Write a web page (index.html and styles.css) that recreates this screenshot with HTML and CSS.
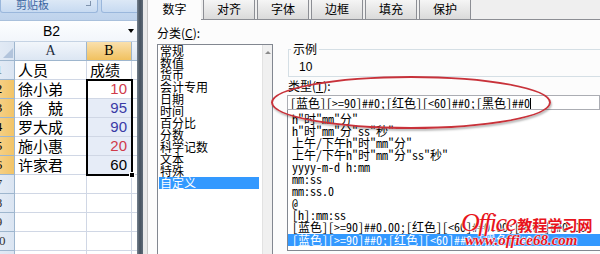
FILE: index.html
```html
<!DOCTYPE html>
<html lang="zh-CN">
<head>
<meta charset="utf-8">
<title>设置单元格格式</title>
<link rel="stylesheet" href="styles.css">
</head>
<body>
<div class="screen">
  <section class="sheet">
    <div class="ribbon">
      <div class="rgroup g1"><span class="rlabel">剪贴板</span><span class="launcher"></span></div>
      <div class="rgroup g2"></div>
    </div>
    <div class="namebar"><span class="namebox">B2</span><span class="dd"></span></div>
    <div class="gridwrap">
      <div class="grid">
        <div class="rh corner"><span class="tri"></span></div><div class="ch">A</div><div class="ch on">B</div><div class="ch"></div>
        <div class="rh">1</div><div class="c">人员</div><div class="c">成绩</div><div class="c"></div>
        <div class="rh on">2</div><div class="c">徐小弟</div><div class="c n red">10</div><div class="c"></div>
        <div class="rh on">3</div><div class="c">徐　兢</div><div class="c n blue tint">95</div><div class="c"></div>
        <div class="rh on">4</div><div class="c">罗大成</div><div class="c n blue tint">90</div><div class="c"></div>
        <div class="rh on">5</div><div class="c">施小惠</div><div class="c n red tint">20</div><div class="c"></div>
        <div class="rh on">6</div><div class="c">许家君</div><div class="c n tint">60</div><div class="c"></div>
        <div class="rh">7</div><div class="c"></div><div class="c"></div><div class="c"></div>
        <div class="rh">8</div><div class="c"></div><div class="c"></div><div class="c"></div>
        <div class="rh">9</div><div class="c"></div><div class="c"></div><div class="c"></div>
        <div class="rh">10</div><div class="c"></div><div class="c"></div><div class="c"></div>
        <div class="rh">11</div><div class="c"></div><div class="c"></div><div class="c"></div>
      </div>
      <div class="selbox"></div>
      <div class="handle"></div>
    </div>
  </section>
  <div class="edge"></div>
  <div class="gapstrip"></div>
  <section class="dialog">
    <div class="tabs">
      <div class="tab active">数字</div>
      <div class="tab">对齐</div>
      <div class="tab">字体</div>
      <div class="tab">边框</div>
      <div class="tab">填充</div>
      <div class="tab">保护</div>
    </div>
    <div class="body">
      <div class="catcol">
        <div class="lbl">分类(<u>C</u>):</div>
        <div class="catbox">
          <ul class="catlist">
            <li>常规</li>
            <li>数值</li>
            <li>货币</li>
            <li>会计专用</li>
            <li>日期</li>
            <li>时间</li>
            <li>百分比</li>
            <li>分数</li>
            <li>科学记数</li>
            <li>文本</li>
            <li>特殊</li>
            <li class="sel">自定义</li>
          </ul>
          <div class="vscroll"><span class="up"></span></div>
        </div>
      </div>
      <div class="maincol">
        <fieldset class="sample">
          <legend>示例</legend>
          <div class="sval">10</div>
        </fieldset>
        <div class="lbl tl">类型(<u>T</u>):</div>
        <div class="input">[蓝色][&gt;=90]##0;[红色][&lt;60]##0;[黑色]##0<span class="caret"></span></div>
        <ul class="fmtlist">
          <li>h"时"mm"分"</li>
          <li>h"时"mm"分"ss"秒"</li>
          <li>上午/下午h"时"mm"分"</li>
          <li>上午/下午h"时"mm"分"ss"秒"</li>
          <li>yyyy-m-d h:mm</li>
          <li>mm:ss</li>
          <li>mm:ss.0</li>
          <li>@</li>
          <li>[h]:mm:ss</li>
          <li>[蓝色][&gt;=90]##0.00;[红色][&lt;60]##0.00;[黑色]##0.00</li>
          <li class="sel">[蓝色][&gt;=90]##0;[红色][&lt;60]##0;[黑色]##0</li>
        </ul>
      </div>
    </div>
  </section>
  <div class="ring"></div>
  <div class="wm">
    <div class="wm1"><span class="wmo">Office</span><span class="wmc">教程学习网</span></div>
    <div class="wm2">www.office68.com</div>
  </div>
</div>
</body>
</html>
```
FILE: styles.css
```css
* { box-sizing: border-box; margin: 0; padding: 0; }
html, body { width: 600px; height: 254px; overflow: hidden; background: #fff; }
body { font-family: "Noto Sans CJK SC", sans-serif; font-size: 12px; color: #000; }
ul { list-style: none; }

.screen { position: relative; display: flex; width: 600px; height: 254px; overflow: hidden; }

/* ---------- spreadsheet ---------- */
.sheet { width: 137px; flex: none; overflow: hidden; display: flex; flex-direction: column; background: #fff; }
.ribbon { height: 20px; flex: none; display: flex; background: linear-gradient(#cadcf1, #bfd3ec); }
.rgroup { height: 13px; background: linear-gradient(#dce8f6, #c7daf1); border: 1px solid #9ab7dc; border-top: none; border-radius: 0 0 3px 3px; }
.g1 { width: 98px; flex: none; display: flex; align-items: flex-end; padding-left: 15px; }
.g2 { width: 40px; flex: none; margin-left: 3px; }
.rlabel { font-size: 11px; line-height: 11px; color: #3a64a0; margin-bottom: 2px; }
.launcher { width: 5px; height: 5px; margin: 1px 6px 0 auto; align-self: flex-start; border-right: 1px solid #7f93ad; border-bottom: 1px solid #7f93ad; }

.namebar { height: 22px; flex: none; display: flex; align-items: center; background: linear-gradient(#fdfeff, #f2f6fb); border-top: 1px solid #a9c0dc; border-bottom: 1px solid #c5d3e4; }
.namebox { width: 103px; text-align: center; font-family: "Liberation Sans", sans-serif; font-size: 14px; }
.dd { margin-left: auto; margin-right: 3px; width: 0; height: 0; border-left: 3px solid transparent; border-right: 3px solid transparent; border-top: 4px solid #000; }

.gridwrap { position: relative; flex: 1; }
.grid { display: grid; grid-template-columns: 31px 72px 45px 30px; grid-auto-rows: 19px; margin-left: -16px; }
.grid > div { border-right: 1px solid #d0d7e5; border-bottom: 1px solid #d0d7e5; }
.rh { background: linear-gradient(90deg, #e9eff8, #dbe5f2); border-color: #9eb6ce !important; font-family: "Liberation Serif", serif; font-size: 13px; line-height: 18px; text-align: center; color: #333; }
.rh.on { background: linear-gradient(90deg, #f9dba3, #f2c467); color: #000; }
.corner { position: relative; }
.tri { position: absolute; right: 1px; bottom: 2px; width: 0; height: 0; border-left: 10px solid transparent; border-bottom: 10px solid #b2c4dc; }
.ch { background: linear-gradient(#f2f6fb, #dce6f3); border-color: #9eb6ce !important; font-family: "Liberation Serif", serif; font-size: 14px; line-height: 18px; text-align: center; color: #1f2d3d; }
.ch.on { background: linear-gradient(#fae0ad, #f1c15f); color: #000; }
.c { font-size: 15px; line-height: 18px; padding-left: 3px; white-space: nowrap; overflow: hidden; }
.c.n { font-family: "Liberation Sans", sans-serif; text-align: right; padding-right: 4px; font-size: 15px; }
.c.tint { background: #e6ecf7; }
.red { color: #d03a4a; }
.blue { color: #3a3aa6; }
.selbox { position: absolute; left: 86px; top: 37px; width: 47px; height: 97px; border: 2px solid #000; }
.handle { position: absolute; left: 129px; top: 130px; width: 6px; height: 6px; background: #000; border: 1px solid #fff; }

.edge { width: 6px; flex: none; background: linear-gradient(90deg, #75818e, #46525f 50%, #5f6b78); }
.gapstrip { width: 5px; flex: none; background: #e9e9e9; border-right: 1px solid #c6c6c6; }

/* ---------- dialog ---------- */
.dialog { flex: 1; min-width: 0; display: flex; flex-direction: column; background: #fcfcfc; overflow: hidden; }
.tabs { height: 20px; flex: none; display: flex; background: #efefef; border-bottom: 1px solid #8c8e94; }
.tab { width: 52px; height: 19px; margin-right: 2px; line-height: 18px; text-align: center; font-size: 12px; background: linear-gradient(#f5f5f5, #dadada); border: 1px solid #8c8e94; border-top: none; border-bottom: none; }
.tab.active { width: 53px; margin-right: 2px; height: 20px; background: #fcfcfc; border: none; }

.body { flex: 1; display: flex; min-height: 0; }
.catcol { width: 125px; flex: none; padding-left: 9px; display: flex; flex-direction: column; }
.lbl { font-size: 12px; line-height: 12px; height: 12px; margin-top: 7px; white-space: nowrap; }
.catbox { margin-top: 5px; flex: 1; display: flex; border: 1px solid #828790; border-bottom: none; background: #fff; }
.catlist { flex: 1; }
.catlist li { height: 12px; line-height: 12px; padding-left: 1px; margin: 0 3px 0 1px; font-size: 12px; white-space: nowrap; }
.catlist li.sel { background: #3399ff; color: #fff; }
.vscroll { width: 10px; flex: none; background: #f0f0f0; border-left: 1px solid #e2e2e2; display: flex; justify-content: center; padding-top: 6px; }
.up { width: 0; height: 0; border-left: 3px solid transparent; border-right: 3px solid transparent; border-bottom: 3px solid #8a8a8a; }

.maincol { flex: 1; min-width: 0; margin-left: 14px; padding-top: 23px; display: flex; flex-direction: column; overflow: hidden; }
.sample { border: 1px solid #d5dfe5; border-right: none; margin-left: 1px; padding: 0 0 3px 2px; }
.sample legend { padding: 0 2px; font-size: 12px; line-height: 12px; }
.sval { margin: 6px 0 0 8px; line-height: 12px; font-size: 12px; font-family: "Liberation Sans", sans-serif; }
.lbl.tl { margin: 3px 0 0 1px; }
.input { margin-top: 3px; height: 15px; border: 1px solid #abadb3; background: #fff; padding-left: 2px; line-height: 13px; font-family: "Noto Sans Mono CJK SC", "Noto Sans CJK SC", monospace; font-size: 12px; white-space: nowrap; overflow: hidden; }
.caret { display: inline-block; width: 1px; height: 11px; background: #000; vertical-align: -1px; }
.fmtlist { height: 141px; flex: none; border: 1px solid #828790; border-top: none; border-right: none; padding-top: 3px; background: #fff; font-family: "Noto Sans Mono CJK SC", "Noto Sans CJK SC", monospace; font-size: 12px; }
.fmtlist li { height: 12px; line-height: 12px; padding-left: 4px; white-space: nowrap; }
.fmtlist li.sel { background: #3399ff; color: #fff; margin-top: 1px; }

/* ---------- overlays ---------- */
.ring { position: absolute; left: 271px; top: 76px; width: 280px; height: 53px; border: 2px solid #c8323a; border-radius: 50%; box-shadow: 1px 2px 2px rgba(0,0,0,.25); }
.wm { position: absolute; left: 461px; top: 212px; color: #e8141c; text-shadow: 0 0 2px #fff, 0 0 2px #fff, 0 0 1px #fff; }
.wm1 { display: flex; align-items: baseline; height: 22px; }
.wmo { font-family: "Liberation Serif", serif; font-style: italic; font-size: 26px; letter-spacing: -1.5px; line-height: 22px; }
.wmc { font-size: 15px; font-weight: 700; line-height: 22px; margin-left: 2px; }
.wm2 { margin-left: 4px; font-family: "Liberation Serif", serif; font-style: italic; font-weight: 700; font-size: 15px; line-height: 12px; }
```
